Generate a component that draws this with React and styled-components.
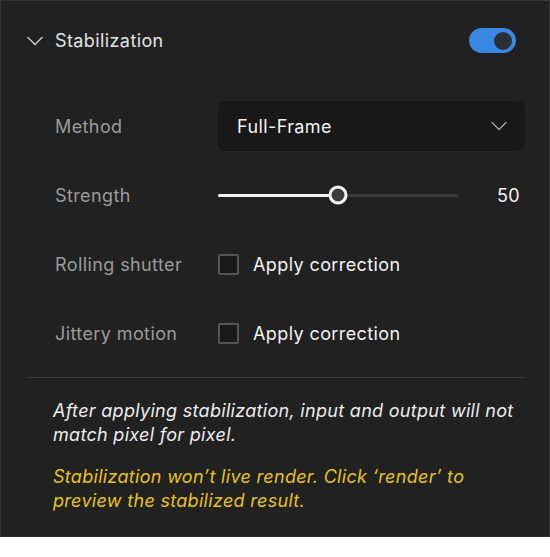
import React, { useState } from "react";
import styled, { createGlobalStyle } from "styled-components";

const GlobalStyle = createGlobalStyle`
  body {
    margin: 0;
    background: #ffffff;
    font-family: Inter, "Noto Sans", sans-serif;
  }
`;

export default function App() {
  const [enabled, setEnabled] = useState(true);
  const [strength] = useState(50);
  const [rolling, setRolling] = useState(false);
  const [jittery, setJittery] = useState(false);

  return (
    <>
      <GlobalStyle />
      <Panel>
        <Header>
          <Chevron width="16" height="10" viewBox="0 0 16 10">
            <path d="M1 1.5 L8 8.5 L15 1.5" />
          </Chevron>
          <Title>Stabilization</Title>
          <Toggle $on={enabled} onClick={() => setEnabled((v) => !v)} />
        </Header>

        <Rows>
          <Row>
            <Label>Method</Label>
            <Select>
              <span>Full-Frame</span>
              <Chevron $dim width="16" height="10" viewBox="0 0 16 10">
                <path d="M1 1.5 L8 8.5 L15 1.5" />
              </Chevron>
            </Select>
          </Row>
          <Row>
            <Label>Strength</Label>
            <SliderWrap>
              <Track>
                <Fill style={{ width: `${strength}%` }} />
                <Knob style={{ left: `${strength}%` }} />
              </Track>
              <Value>{strength}</Value>
            </SliderWrap>
          </Row>
          <Row>
            <Label>Rolling shutter</Label>
            <CheckLine onClick={() => setRolling((v) => !v)}>
              <Box $checked={rolling} />
              Apply correction
            </CheckLine>
          </Row>
          <Row>
            <Label>Jittery motion</Label>
            <CheckLine onClick={() => setJittery((v) => !v)}>
              <Box $checked={jittery} />
              Apply correction
            </CheckLine>
          </Row>
        </Rows>

        <Divider />

        <Notes>
          <Note>
            After applying stabilization, input and output will not match pixel
            for pixel.
          </Note>
          <Note $warn>
            Stabilization won’t live render. Click ‘render’ to preview the
            stabilized result.
          </Note>
        </Notes>
      </Panel>
    </>
  );
}

const Panel = styled.div`
  box-sizing: border-box;
  width: 550px;
  height: 537px;
  background: #212121;
  border: 1px solid #343434;
  border-bottom-color: #2a2a2a;
  padding: 0 24px 0 26px;
  color: #ececec;
  font-size: 18px;
  letter-spacing: 0.4px;
`;

const Header = styled.div`
  height: 79px;
  display: flex;
  align-items: center;
  gap: 12px;
`;

const Chevron = styled.svg`
  flex: none;
  path {
    fill: none;
    stroke: ${(p) => (p.$dim ? "#a8a8a8" : "#c8c8c8")};
    stroke-width: ${(p) => (p.$dim ? 1.3 : 1.5)};
    stroke-linecap: round;
    stroke-linejoin: round;
  }
`;

const Title = styled.div`
  flex: 1;
  color: #e4e4e4;
`;

const Toggle = styled.div`
  position: relative;
  width: 47px;
  height: 25px;
  margin-right: 9px;
  border-radius: 13px;
  background: ${(p) => (p.$on ? "#3b88e4" : "#444")};
  cursor: pointer;
  &::after {
    content: "";
    position: absolute;
    top: 3.5px;
    left: ${(p) => (p.$on ? "25px" : "4px")};
    width: 18px;
    height: 18px;
    border-radius: 50%;
    background: #2a2e35;
  }
`;

const Rows = styled.div`
  display: flex;
  flex-direction: column;
  gap: 19px;
  padding-top: 21px;
`;

const Row = styled.div`
  display: grid;
  grid-template-columns: 191px 1fr;
  align-items: center;
  height: 50px;
`;

const Label = styled.div`
  padding-left: 28px;
  color: #9b9b9b;
`;

const Select = styled.div`
  height: 50px;
  display: flex;
  align-items: center;
  justify-content: space-between;
  padding: 0 18px 0 19px;
  background: #181818;
  border-radius: 7px;
  color: #f2f2f2;
  cursor: pointer;
`;

const SliderWrap = styled.div`
  display: grid;
  grid-template-columns: 240px 1fr;
  align-items: center;
`;

const Track = styled.div`
  position: relative;
  height: 3px;
  background: #383838;
  border-radius: 2px;
`;

const Fill = styled.div`
  height: 100%;
  background: #f4f4f4;
  border-radius: 2px;
`;

const Knob = styled.div`
  position: absolute;
  top: 50%;
  width: 13px;
  height: 13px;
  transform: translate(-50%, -50%);
  border: 3px solid #f6f6f6;
  border-radius: 50%;
  background: #3c3c3c;
`;

const Value = styled.div`
  text-align: right;
  padding-right: 5px;
  color: #f2f2f2;
`;

const CheckLine = styled.div`
  display: flex;
  align-items: center;
  gap: 14px;
  color: #f2f2f2;
  cursor: pointer;
`;

const Box = styled.span`
  box-sizing: border-box;
  width: 21px;
  height: 21px;
  border: 2px solid #555;
  border-radius: 2px;
  background: ${(p) => (p.$checked ? "#3b88e4" : "#191919")};
`;

const Divider = styled.div`
  height: 1px;
  background: #3a3a3a;
  margin-top: 19px;
`;

const Notes = styled.div`
  display: flex;
  flex-direction: column;
  gap: 18px;
  padding: 21px 0 0 26px;
`;

const Note = styled.p`
  margin: 0;
  font-style: italic;
  line-height: 24px;
  letter-spacing: 0.3px;
  color: ${(p) => (p.$warn ? "#e6c31e" : "#ececec")};
`;
